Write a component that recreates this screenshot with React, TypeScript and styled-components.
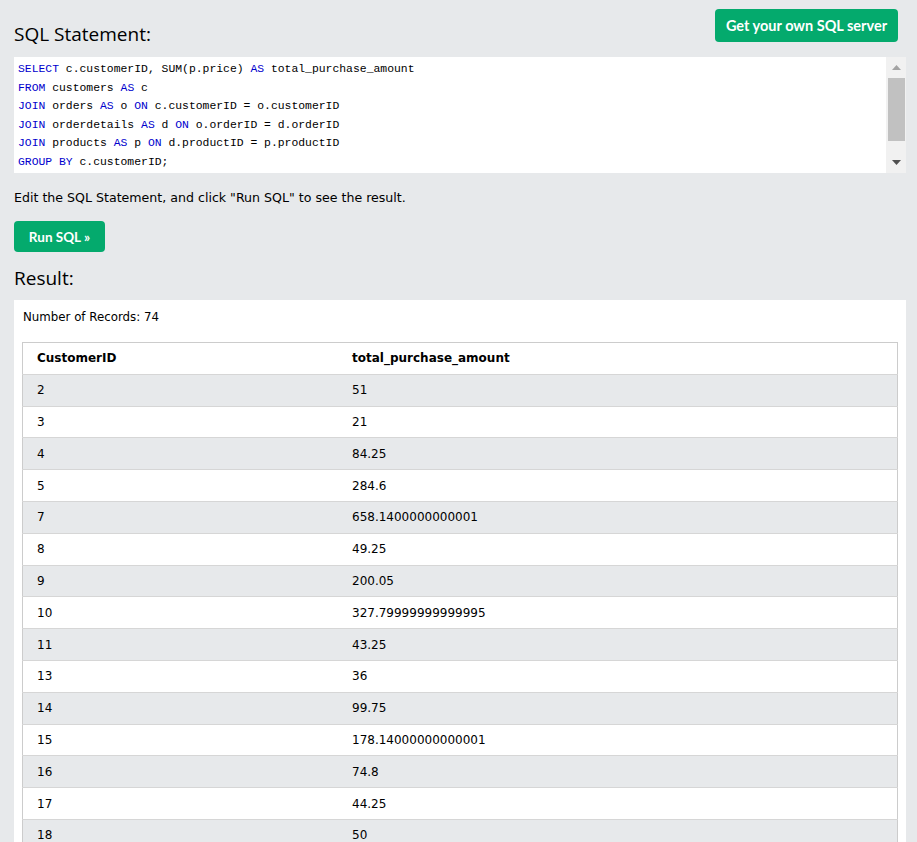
import React from "react";
import styled, { createGlobalStyle } from "styled-components";

const Global = createGlobalStyle`
  html, body { margin: 0; padding: 0; background: #e7e9eb; }
  body { font-family: "DejaVu Sans", Verdana, sans-serif; color: #000; }
`;

const Page = styled.div`
  padding: 9px 11px 0 14px;
  display: flex;
  flex-direction: column;
`;

const TopBar = styled.div`
  display: flex;
  justify-content: space-between;
  align-items: flex-start;
  height: 48px;
  padding-right: 8px;
`;

const Heading = styled.h2`
  margin: 12px 0 0 0;
  font-family: "Open Sans", "Noto Sans", sans-serif;
  font-weight: 400;
  font-size: 19px;
  line-height: 26px;
  color: #000;
`;

const GreenButton = styled.button<{ $w: number; $h: number; $fs: number }>`
  width: ${(p) => p.$w}px;
  height: ${(p) => p.$h}px;
  background: #04aa6d;
  color: #fff;
  border: none;
  border-radius: 4px;
  font-family: Lato, "Open Sans", sans-serif;
  font-weight: 700;
  font-size: ${(p) => p.$fs}px;
  padding: 0;
  display: flex;
  align-items: center;
  justify-content: center;
  cursor: pointer;
`;

const CodeBox = styled.div`
  display: flex;
  height: 116px;
  background: #fff;
`;

const CodeText = styled.pre`
  flex: 1;
  margin: 0;
  padding: 3px 4px 0 4px;
  font-family: "Liberation Mono", "DejaVu Sans Mono", monospace;
  font-size: 11.4px;
  line-height: 18.6px;
  color: #000;
  overflow: hidden;
`;

const Kw = styled.span`
  color: mediumblue;
`;

const ScrollTrack = styled.div`
  width: 20px;
  background: #f1f1f1;
  display: flex;
  flex-direction: column;
  align-items: center;
`;

const ArrowBox = styled.div`
  height: 21px;
  width: 100%;
  display: flex;
  align-items: center;
  justify-content: center;
`;

const Thumb = styled.div`
  width: 17px;
  height: 63px;
  background: #c1c1c1;
`;

const Spacer = styled.div`
  flex: 1;
`;

const Hint = styled.p`
  margin: 15px 0 0 0;
  font-size: 12.6px;
  line-height: 20px;
  color: #000;
`;

const RunRow = styled.div`
  margin-top: 13px;
`;

const ResultHeading = styled(Heading)`
  margin: 13px 0 0 0;
`;

const Panel = styled.div`
  margin-top: 9px;
  background: #fff;
  padding: 8px 8px 24px 8px;
`;

const Count = styled.div`
  font-size: 11.8px;
  line-height: 18px;
  padding-left: 1px;
  color: #000;
`;

const Table = styled.table`
  margin-top: 16px;
  width: 100%;
  border-collapse: collapse;
  border: 1px solid #ccc;
  font-size: 12px;
`;

const Row = styled.tr<{ $shade: boolean }>`
  background: ${(p) => (p.$shade ? "#e7e9eb" : "#fff")};
  border-bottom: 1px solid #d6d6d6;
  height: 31.8px;
`;

const Th = styled.th<{ $w?: number }>`
  text-align: left;
  font-weight: 700;
  padding: 0 14px;
  ${(p) => (p.$w ? `width: ${p.$w}px;` : "")}
`;

const Td = styled.td`
  padding: 0 14px;
`;

const rows: [string, string][] = [
  ["2", "51"],
  ["3", "21"],
  ["4", "84.25"],
  ["5", "284.6"],
  ["7", "658.1400000000001"],
  ["8", "49.25"],
  ["9", "200.05"],
  ["10", "327.79999999999995"],
  ["11", "43.25"],
  ["13", "36"],
  ["14", "99.75"],
  ["15", "178.14000000000001"],
  ["16", "74.8"],
  ["17", "44.25"],
  ["18", "50"],
];

export default function App() {
  return (
    <>
      <Global />
      <Page>
        <TopBar>
          <Heading>SQL Statement:</Heading>
          <GreenButton $w={183} $h={33} $fs={14.5}>
            Get your own SQL server
          </GreenButton>
        </TopBar>
        <CodeBox>
          <CodeText>
            <Kw>SELECT</Kw> c.customerID, SUM(p.price) <Kw>AS</Kw> total_purchase_amount
            {"\n"}
            <Kw>FROM</Kw> customers <Kw>AS</Kw> c{"\n"}
            <Kw>JOIN</Kw> orders <Kw>AS</Kw> o <Kw>ON</Kw> c.customerID = o.customerID
            {"\n"}
            <Kw>JOIN</Kw> orderdetails <Kw>AS</Kw> d <Kw>ON</Kw> o.orderID = d.orderID
            {"\n"}
            <Kw>JOIN</Kw> products <Kw>AS</Kw> p <Kw>ON</Kw> d.productID = p.productID
            {"\n"}
            <Kw>GROUP BY</Kw> c.customerID;
          </CodeText>
          <ScrollTrack>
            <ArrowBox>
              <svg width="9" height="5" viewBox="0 0 9 5">
                <path d="M4.5 0 L9 5 L0 5 Z" fill="#a3a3a3" />
              </svg>
            </ArrowBox>
            <Thumb />
            <Spacer />
            <ArrowBox>
              <svg width="9" height="5" viewBox="0 0 9 5">
                <path d="M0 0 L9 0 L4.5 5 Z" fill="#505050" />
              </svg>
            </ArrowBox>
          </ScrollTrack>
        </CodeBox>
        <Hint>Edit the SQL Statement, and click "Run SQL" to see the result.</Hint>
        <RunRow>
          <GreenButton $w={91} $h={31} $fs={13.5}>
            Run SQL »
          </GreenButton>
        </RunRow>
        <ResultHeading>Result:</ResultHeading>
        <Panel>
          <Count>Number of Records: 74</Count>
          <Table>
            <thead>
              <Row $shade={false}>
                <Th $w={287}>CustomerID</Th>
                <Th>total_purchase_amount</Th>
              </Row>
            </thead>
            <tbody>
              {rows.map(([id, amt], i) => (
                <Row key={id} $shade={i % 2 === 0}>
                  <Td>{id}</Td>
                  <Td>{amt}</Td>
                </Row>
              ))}
            </tbody>
          </Table>
        </Panel>
      </Page>
    </>
  );
}
